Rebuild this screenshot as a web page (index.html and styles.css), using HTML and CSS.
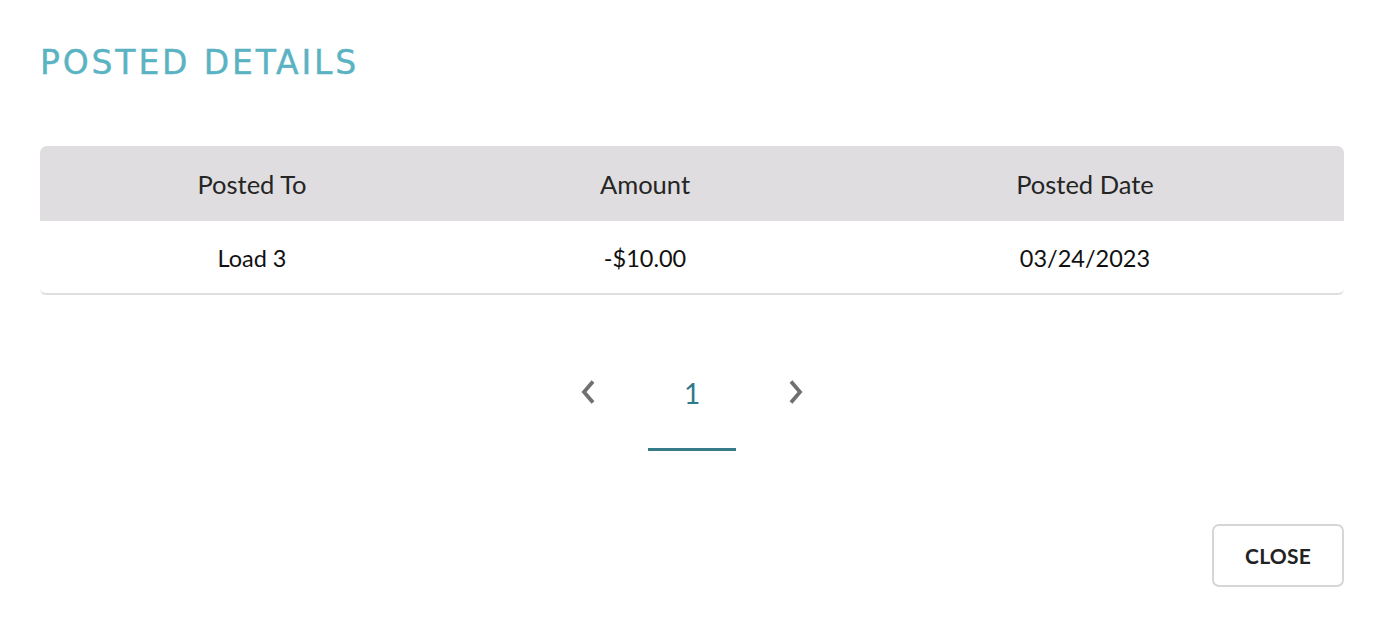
FILE: index.html
```html
<!DOCTYPE html>
<html>
<head>
<meta charset="utf-8">
<link rel="stylesheet" href="styles.css">
</head>
<body>
<div class="dialog">
  <h1 class="title">POSTED DETAILS</h1>
  <div class="table">
    <div class="row head">
      <div class="cell">Posted To</div>
      <div class="cell">Amount</div>
      <div class="cell">Posted Date</div>
    </div>
    <div class="row body">
      <div class="cell">Load 3</div>
      <div class="cell">-$10.00</div>
      <div class="cell">03/24/2023</div>
    </div>
  </div>
  <div class="pager">
    <button class="nav">
      <svg width="18" height="26" viewBox="0 0 18 26"><path d="M14 2.5 L5 13 L14 23.5" fill="none" stroke="#707070" stroke-width="3.8"/></svg>
    </button>
    <div class="page">1</div>
    <button class="nav">
      <svg width="18" height="26" viewBox="0 0 18 26"><path d="M4 2.5 L13 13 L4 23.5" fill="none" stroke="#707070" stroke-width="3.8"/></svg>
    </button>
  </div>
  <div class="actions">
    <button class="close">CLOSE</button>
  </div>
</div>
</body>
</html>
```

FILE: styles.css
```css
html, body {
  margin: 0;
  padding: 0;
  background: #ffffff;
}
body {
  font-family: Lato, "Liberation Sans", sans-serif;
  color: #1b1b1b;
}
.dialog {
  padding: 40px 40px 0 40px;
}
.title {
  margin: 0;
  font-family: "DejaVu Sans", "Open Sans", sans-serif;
  font-weight: 400;
  font-size: 33px;
  line-height: 46px;
  letter-spacing: 2.85px;
  color: #5ab3c3;
  -webkit-text-stroke: 0.4px #5ab3c3;
  height: 44px;
}
.table {
  margin-top: 62px;
  border-radius: 7px 7px 6px 6px;
  border-bottom: 2px solid #dedede;
}
.row {
  display: grid;
  grid-template-columns: 424px 362px 1fr;
}
.head {
  background: #dfdddf;
  height: 75px;
  border-radius: 7px 7px 0 0;
}
.body {
  height: 72px;
}
.cell {
  display: flex;
  align-items: center;
  justify-content: center;
}
.head .cell {
  color: #252525;
  font-size: 25.5px;
  padding-top: 1px;
}
.body .cell {
  color: #111111;
  font-size: 23.5px;
  padding-top: 1px;
}
.pager {
  margin-top: 62px;
  display: flex;
  justify-content: center;
  align-items: flex-start;
}
.nav {
  background: none;
  border: none;
  padding: 0;
  width: 60px;
  height: 70px;
  display: flex;
  align-items: center;
  justify-content: center;
  cursor: pointer;
}
.page {
  width: 88px;
  height: 94px;
  box-sizing: border-box;
  border-bottom: 3px solid #367b89;
  padding-top: 20px;
  line-height: 32px;
  text-align: center;
  font-size: 28px;
  color: #2f7a8a;
  margin: 0 30px;
}
.actions {
  display: flex;
  justify-content: flex-end;
  margin-top: 73px;
}
.close {
  width: 132px;
  height: 63px;
  border: 2px solid #d6d6d6;
  border-radius: 7px;
  background: #ffffff;
  font-family: Lato, "Liberation Sans", sans-serif;
  font-weight: 700;
  font-size: 21px;
  color: #222222;
  letter-spacing: 0.2px;
  cursor: pointer;
}
```
